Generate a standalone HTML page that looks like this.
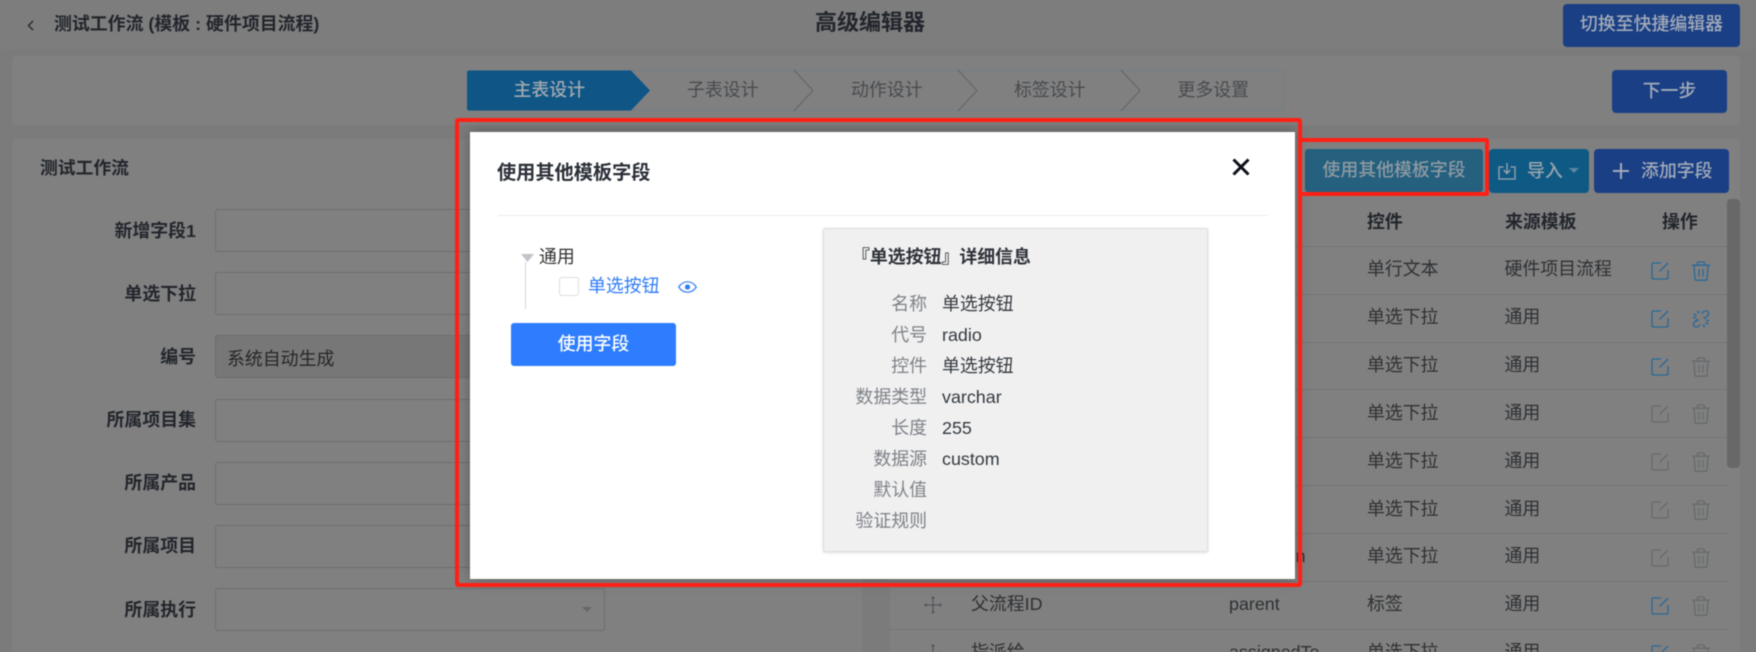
<!DOCTYPE html>
<html lang="zh">
<head>
<meta charset="utf-8">
<title>高级编辑器</title>
<style>
html,body{margin:0;padding:0;width:1756px;height:652px;overflow:hidden;background:#7b7b7b}
body{font-family:"Liberation Sans","Noto Sans CJK SC",sans-serif;position:relative}
#root{position:absolute;left:0;top:0;width:1756px;height:652px;overflow:hidden;filter:blur(.4px)}
.t{position:absolute;white-space:nowrap;line-height:24px;height:24px;font-size:17.9px;color:#2e3033}
.b{font-weight:700;color:#22262c}
.box{position:absolute;box-sizing:border-box}
.panel{position:absolute;background:#808080;border-radius:4px}
.inp{position:absolute;box-sizing:border-box;left:215px;width:390px;height:43px;border:1px solid #6d6d6d;border-radius:3px}
.btn{position:absolute;border-radius:4px}
.line{position:absolute;left:890px;width:837px;height:1px;background:#747474}
.lb{width:180px;left:16px;text-align:right}
svg.i{position:absolute;overflow:visible}
.blue{color:#28689b}
.gray{color:#666a6e}
.l{position:absolute;color:#7e8288;font-size:17.9px;line-height:24px;height:24px;left:827px;width:100px;text-align:right;white-space:nowrap}
.v{position:absolute;color:#343a40;font-size:17.9px;line-height:24px;height:24px;left:942px;white-space:nowrap}
</style>
</head>
<body>
<svg width="0" height="0" style="position:absolute">
<defs>
<symbol id="edit" viewBox="0 0 18 18"><path d="M10 1H2.200C1.500 1 1 1.500 1 2.200v13.600c0 .7.5 1.200 1.200 1.200h13.600c.7 0 1.200-.5 1.200-1.200V8M17 1 8.500 9.500" fill="none" stroke="currentColor" stroke-width="1.300"/></symbol>
<symbol id="trash" viewBox="0 0 18 20"><path d="M0 4.200h18M5.500 4V1.800C5.500 1.200 6 1 6.500 1h5c.5 0 1 .2 1 .8V4M2 4.500l1 13.700c0 .6.500 1 1 1h10c.5 0 1-.4 1-1l1-13.700M7 8v7.500M11 8v7.500" fill="none" stroke="currentColor" stroke-width="1.300"/></symbol>
<symbol id="unlink" viewBox="0 0 18 20"><path d="M9.500 4.500 12 2.500c1.200-1 2.800-.9 3.800.2s1 2.700 0 3.800L13 9.500 11.500 8M8.500 15.500 6 17.500c-1.200 1-2.800.9-3.800-.2s-1-2.700 0-3.800L5 10.500 6.500 12M5.500 1.500 6.700 4.500M1.500 5 4.500 6.300M1 8.500 4 8.500M12.500 18.500 11.300 15.500M16.500 15 13.500 13.700M17 11.500 14 11.500" fill="none" stroke="currentColor" stroke-width="1.400"/></symbol>
<symbol id="move" viewBox="0 0 18 18"><path d="M9 1v16M1 9h16" stroke="currentColor" stroke-width="1.100" fill="none"/><path d="M9 0 11 2.500H7zM9 18 11 15.500H7zM0 9 2.500 7V11zM18 9 15.500 7V11z" fill="currentColor"/></symbol>
</defs>
</svg>
<div id="root">
<!-- header -->
<div class="box" style="left:0;top:0;width:1756px;height:50px;background:#7d7d7d"></div>
<svg class="i" style="left:27px;top:20px" width="7" height="11" viewBox="0 0 7 11"><path d="M6 1 1.500 5.500 6 10" fill="none" stroke="#22262c" stroke-width="1.400"/></svg>
<div class="t b" style="left:54px;top:12px;font-size:17.900px">测试工作流 (模板 : 硬件项目流程)</div>
<div class="t b" style="left:815px;top:10px;font-size:22px;line-height:26px;height:26px">高级编辑器</div>
<div class="btn" style="left:1563px;top:4px;width:177px;height:43px;background:#1a3f85"></div>
<div class="t" style="left:1563px;width:177px;text-align:center;top:12px;color:#a3abb8;font-weight:500">切换至快捷编辑器</div>

<!-- steps panel -->
<div class="panel" style="left:12px;top:56px;width:1728px;height:69px"></div>
<div class="box" style="left:467px;top:70px;width:817px;height:41px;border:1px solid #727c86;border-radius:3px"></div>
<svg class="i" style="left:467px;top:70px" width="183" height="41" viewBox="0 0 183 41"><path d="M2 .5H164L183 20.500 164 40.500H2Q0 40.500 0 38.500V2.500Q0 .5 2 .5z" fill="#0f5585"/></svg>
<svg class="i" style="left:794px;top:70px" width="20" height="41" viewBox="0 0 20 41"><path d="M0 0 19 20.500 0 41" fill="none" stroke="#5f6468" stroke-width="1"/></svg>
<svg class="i" style="left:958px;top:70px" width="20" height="41" viewBox="0 0 20 41"><path d="M0 0 19 20.500 0 41" fill="none" stroke="#5f6468" stroke-width="1"/></svg>
<svg class="i" style="left:1121px;top:70px" width="20" height="41" viewBox="0 0 20 41"><path d="M0 0 19 20.500 0 41" fill="none" stroke="#5f6468" stroke-width="1"/></svg>
<div class="t" style="left:513.500px;top:78px;color:#a0a8b0;font-weight:500">主表设计</div>
<div class="t" style="left:687px;top:78px;color:#484b4f">子表设计</div>
<div class="t" style="left:851px;top:78px;color:#484b4f">动作设计</div>
<div class="t" style="left:1014px;top:78px;color:#484b4f">标签设计</div>
<div class="t" style="left:1177.500px;top:78px;color:#484b4f">更多设置</div>
<div class="btn" style="left:1612px;top:70px;width:115px;height:43px;background:#1a3f85"></div>
<div class="t" style="left:1612px;width:115px;text-align:center;top:79px;color:#a3abb8;font-weight:500">下一步</div>

<!-- left panel -->
<div class="panel" style="left:12px;top:139px;width:850px;height:530px"></div>
<div class="t b" style="left:40px;top:156px;font-size:17.800px">测试工作流</div>
<div class="t b lb" style="top:219px">新增字段1</div><div class="inp" style="top:209px"></div>
<div class="t b lb" style="top:282px">单选下拉</div><div class="inp" style="top:272px"></div>
<div class="t b lb" style="top:345px">编号</div><div class="inp" style="top:335px;background:#777"></div>
<div class="t" style="left:227px;top:347px;color:#262626">系统自动生成</div>
<div class="t b lb" style="top:408px">所属项目集</div><div class="inp" style="top:399px"></div>
<div class="t b lb" style="top:471px">所属产品</div><div class="inp" style="top:462px"></div>
<div class="t b lb" style="top:534px">所属项目</div><div class="inp" style="top:525px"></div>
<div class="t b lb" style="top:598px">所属执行</div><div class="inp" style="top:588px"></div>
<svg class="i" style="left:582px;top:607px" width="10" height="5" viewBox="0 0 10 5"><path d="M0 0H10L5 5z" fill="#666"/></svg>

<!-- right panel -->
<div class="panel" style="left:890px;top:139px;width:850px;height:530px"></div>
<div class="btn" style="left:1305px;top:149px;width:178px;height:43px;background:#25607f;border-radius:3px"></div>
<div class="t" style="left:1305px;width:178px;text-align:center;top:158px;color:#8e9aa2;font-weight:500">使用其他模板字段</div>
<div class="btn" style="left:1489px;top:149px;width:100px;height:44px;background:#0f5a85"></div>
<svg class="i" style="left:1498px;top:162px;color:#9aa5ad" width="18" height="18" viewBox="0 0 18 18"><path d="M5.500 5H1v12h16V5h-4.500M9 1v10M5.800 8 9 11.500 12.200 8" fill="none" stroke="currentColor" stroke-width="1.300"/></svg>
<div class="t" style="left:1527px;top:159px;color:#9aa5ad;font-weight:500">导入</div>
<svg class="i" style="left:1569px;top:168px" width="10" height="5" viewBox="0 0 10 5"><path d="M0 0H10L5 5z" fill="#5b86a3"/></svg>
<div class="btn" style="left:1594px;top:149px;width:135px;height:44px;background:#1a3f85"></div>
<svg class="i" style="left:1613px;top:163px" width="16" height="16" viewBox="0 0 16 16"><path d="M8 0V16M0 8H16" stroke="#a3abb8" stroke-width="2" fill="none"/></svg>
<div class="t" style="left:1641px;top:159px;color:#a3abb8;font-weight:500">添加字段</div>

<div class="box" style="left:1727px;top:199px;width:13px;height:269px;background:#686868;border-radius:4px"></div>
<div class="t b" style="left:1367px;top:210px">控件</div>
<div class="t b" style="left:1505px;top:210px">来源模板</div>
<div class="t b" style="left:1662px;top:210px">操作</div>
<div class="line" style="top:246px"></div><div class="line" style="top:294px"></div><div class="line" style="top:342px"></div><div class="line" style="top:389px"></div><div class="line" style="top:437px"></div><div class="line" style="top:485px"></div><div class="line" style="top:533px"></div><div class="line" style="top:581px"></div><div class="line" style="top:629px"></div>

<div class="t" style="left:1367px;top:257px">单行文本</div><div class="t" style="left:1504.500px;top:257px">硬件项目流程</div>
<div class="t" style="left:1367px;top:305px">单选下拉</div><div class="t" style="left:1504.500px;top:305px">通用</div>
<div class="t" style="left:1367px;top:353px">单选下拉</div><div class="t" style="left:1504.500px;top:353px">通用</div>
<div class="t" style="left:1367px;top:401px">单选下拉</div><div class="t" style="left:1504.500px;top:401px">通用</div>
<div class="t" style="left:1367px;top:449px">单选下拉</div><div class="t" style="left:1504.500px;top:449px">通用</div>
<div class="t" style="left:1367px;top:497px">单选下拉</div><div class="t" style="left:1504.500px;top:497px">通用</div>
<div class="t" style="left:1229px;top:544px">execution</div><div class="t" style="left:1367px;top:544px">单选下拉</div><div class="t" style="left:1504.500px;top:544px">通用</div>
<div class="t" style="left:971px;top:592px">父流程ID</div><div class="t" style="left:1229px;top:592px">parent</div><div class="t" style="left:1367px;top:592px">标签</div><div class="t" style="left:1504.500px;top:592px">通用</div>
<div class="t" style="left:971px;top:640px">指派给</div><div class="t" style="left:1229px;top:640px">assignedTo</div><div class="t" style="left:1367px;top:640px">单选下拉</div><div class="t" style="left:1504.500px;top:640px">通用</div>

<svg class="i blue" style="left:1651px;top:262px" width="18" height="18"><use href="#edit"/></svg>
<svg class="i blue" style="left:1692px;top:261px" width="18" height="20"><use href="#trash"/></svg>
<svg class="i blue" style="left:1651px;top:310px" width="18" height="18"><use href="#edit"/></svg>
<svg class="i blue" style="left:1692px;top:309px" width="18" height="20"><use href="#unlink"/></svg>
<svg class="i blue" style="left:1651px;top:358px" width="18" height="18"><use href="#edit"/></svg>
<svg class="i gray" style="left:1692px;top:357px" width="18" height="20"><use href="#trash"/></svg>
<svg class="i gray" style="left:1651px;top:405px" width="18" height="18"><use href="#edit"/></svg>
<svg class="i gray" style="left:1692px;top:404px" width="18" height="20"><use href="#trash"/></svg>
<svg class="i gray" style="left:1651px;top:453px" width="18" height="18"><use href="#edit"/></svg>
<svg class="i gray" style="left:1692px;top:452px" width="18" height="20"><use href="#trash"/></svg>
<svg class="i gray" style="left:1651px;top:501px" width="18" height="18"><use href="#edit"/></svg>
<svg class="i gray" style="left:1692px;top:500px" width="18" height="20"><use href="#trash"/></svg>
<svg class="i gray" style="left:1651px;top:549px" width="18" height="18"><use href="#edit"/></svg>
<svg class="i gray" style="left:1692px;top:548px" width="18" height="20"><use href="#trash"/></svg>
<svg class="i blue" style="left:1651px;top:597px" width="18" height="18"><use href="#edit"/></svg>
<svg class="i gray" style="left:1692px;top:596px" width="18" height="20"><use href="#trash"/></svg>
<svg class="i blue" style="left:1651px;top:645px" width="18" height="18"><use href="#edit"/></svg>
<svg class="i gray" style="left:1692px;top:644px" width="18" height="20"><use href="#trash"/></svg>
<svg class="i gray" style="left:924px;top:596px;color:#4e5257" width="18" height="18"><use href="#move"/></svg>
<svg class="i gray" style="left:924px;top:644px;color:#4e5257" width="18" height="18"><use href="#move"/></svg>

<!-- modal -->
<div class="box" style="left:470px;top:132px;width:825px;height:447px;background:#fff;box-shadow:0 0 14px rgba(0,0,0,.28)"></div>
<div class="t" style="left:497px;top:161px;font-size:19.200px;font-weight:700;color:#2b2f38;line-height:26px;height:26px">使用其他模板字段</div>
<svg class="i" style="left:1232px;top:158px" width="18" height="18" viewBox="0 0 18 18"><path d="M1.500 1.500 16.500 16.500M16.500 1.500 1.500 16.500" stroke="#0c1018" stroke-width="3" fill="none"/></svg>
<div class="box" style="left:498px;top:215px;width:770px;height:1px;background:#ececec"></div>

<svg class="i" style="left:521px;top:254px" width="13" height="8" viewBox="0 0 13 8"><path d="M0 0H13L6.500 8z" fill="#c0c4cc"/></svg>
<div class="box" style="left:525px;top:262px;width:1px;height:47px;background:#d5d5d5"></div>
<div class="t" style="left:539px;top:245px;color:#333;font-size:17.900px">通用</div>
<div class="box" style="left:559px;top:277px;width:20px;height:19px;border:1px solid #dcdcdc;border-radius:3px;background:#fff"></div>
<div class="t" style="left:588px;top:274px;color:#2f7cf6">单选按钮</div>
<svg class="i" style="left:677.500px;top:281px" width="19" height="12" viewBox="0 0 19 12"><path d="M.7 6C3 2.500 6 .8 9.500.8S16 2.500 18.300 6C16 9.500 13 11.200 9.500 11.200S3 9.500 .7 6z" fill="none" stroke="#2f7cf6" stroke-width="1.200"/><circle cx="9.500" cy="6" r="2.600" fill="#2f7cf6"/></svg>
<div class="btn" style="left:511px;top:323px;width:165px;height:43px;background:#2e7dff;border-radius:3px"></div>
<div class="t" style="left:511px;width:165px;text-align:center;top:332px;color:#fff;font-weight:500">使用字段</div>

<div class="box" style="left:823px;top:228px;width:385px;height:324px;background:#f0f0f0;border:1px solid #dedede;border-radius:2px;box-shadow:0 1px 3px rgba(0,0,0,.12)"></div>
<div class="t" style="left:852px;top:245px;font-weight:700;font-size:17.900px;color:#2f333a">『单选按钮』详细信息</div>
<div class="l" style="top:292px">名称</div><div class="v" style="top:292px">单选按钮</div>
<div class="l" style="top:323px">代号</div><div class="v" style="top:323px">radio</div>
<div class="l" style="top:354px">控件</div><div class="v" style="top:354px">单选按钮</div>
<div class="l" style="top:385px">数据类型</div><div class="v" style="top:385px">varchar</div>
<div class="l" style="top:416px">长度</div><div class="v" style="top:416px">255</div>
<div class="l" style="top:447px">数据源</div><div class="v" style="top:447px">custom</div>
<div class="l" style="top:478px">默认值</div>
<div class="l" style="top:509px">验证规则</div>

<!-- red annotations -->
<div class="box" style="left:455px;top:118px;width:847px;height:469px;border:4px solid #ff2015;border-radius:3px"></div>
<div class="box" style="left:1299px;top:138px;width:190px;height:58px;border:4px solid #ff2015;border-left:0;border-radius:0 3px 3px 0"></div>
</div>
</body>
</html>
